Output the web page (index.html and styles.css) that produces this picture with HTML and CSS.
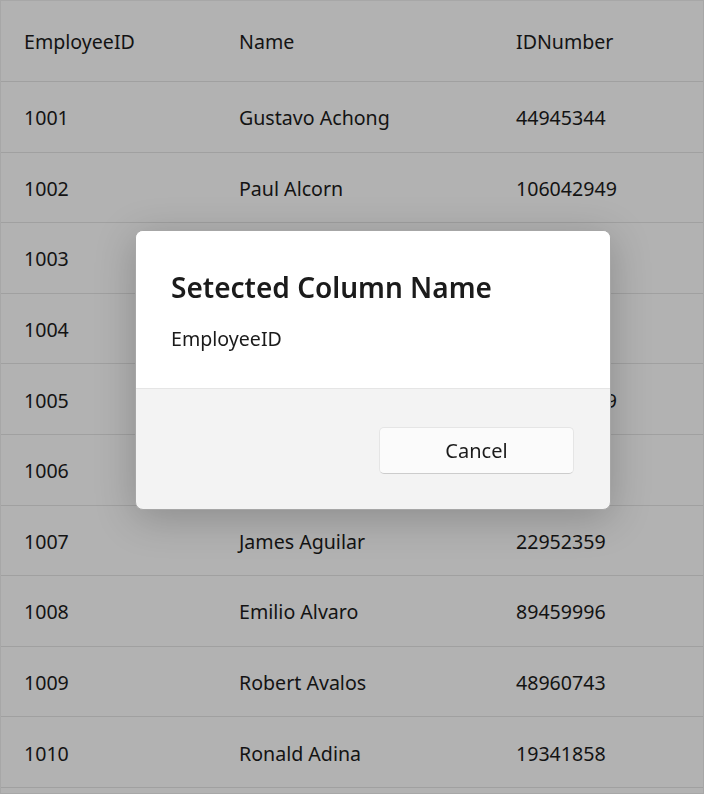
FILE: index.html
```html
<!DOCTYPE html>
<html>
<head>
<meta charset="utf-8">
<link rel="stylesheet" href="styles.css">
</head>
<body>
<div class="grid">
  <div class="row header">
    <div class="cell c1">EmployeeID</div>
    <div class="cell c2">Name</div>
    <div class="cell c3">IDNumber</div>
  </div>
  <div class="row"><div class="cell c1">1001</div><div class="cell c2">Gustavo Achong</div><div class="cell c3">44945344</div></div>
  <div class="row"><div class="cell c1">1002</div><div class="cell c2">Paul Alcorn</div><div class="cell c3">106042949</div></div>
  <div class="row"><div class="cell c1">1003</div><div class="cell c2"></div><div class="cell c3"></div></div>
  <div class="row"><div class="cell c1">1004</div><div class="cell c2"></div><div class="cell c3"></div></div>
  <div class="row"><div class="cell c1">1005</div><div class="cell c2"></div><div class="cell c3">102763549</div></div>
  <div class="row"><div class="cell c1">1006</div><div class="cell c2"></div><div class="cell c3"></div></div>
  <div class="row"><div class="cell c1">1007</div><div class="cell c2">James Aguilar</div><div class="cell c3">22952359</div></div>
  <div class="row"><div class="cell c1">1008</div><div class="cell c2">Emilio Alvaro</div><div class="cell c3">89459996</div></div>
  <div class="row"><div class="cell c1">1009</div><div class="cell c2">Robert Avalos</div><div class="cell c3">48960743</div></div>
  <div class="row"><div class="cell c1">1010</div><div class="cell c2">Ronald Adina</div><div class="cell c3">19341858</div></div>
</div>
<div class="overlay"></div>
<div class="dialog">
  <div class="dialog-body">
    <div class="dialog-title">Setected Column Name</div>
    <div class="dialog-text">EmployeeID</div>
  </div>
  <div class="dialog-footer">
    <button class="btn">Cancel</button>
  </div>
</div>
</body>
</html>
```
FILE: styles.css
```css
html, body {
  margin: 0;
  padding: 0;
  width: 704px;
  height: 794px;
  overflow: hidden;
  background: #ffffff;
  font-family: "Noto Sans", "Open Sans", sans-serif;
  color: #1c1c1c;
}
.grid {
  box-sizing: border-box;
  width: 704px;
  height: 794px;
  border: 1px solid #f0f0f0;
  display: flex;
  flex-direction: column;
}
.row {
  display: flex;
  box-sizing: border-box;
  height: 70.6px;
  border-bottom: 1px solid #e5e5e5;
  flex: none;
}
.row.header {
  height: 81px;
}
.cell {
  display: flex;
  align-items: center;
  box-sizing: border-box;
  font-size: 19.6px;
  white-space: nowrap;
  overflow: hidden;
}
.row .cell { padding-top: 2px; }
.row.header .cell { padding-top: 0; }
.c1 { width: 215px; padding-left: 23px; }
.c2 { width: 277px; padding-left: 23px; }
.c3 { flex: 1; padding-left: 23px; }
.overlay {
  position: fixed;
  inset: 0;
  background: rgba(0, 0, 0, 0.3);
}
.dialog {
  position: absolute;
  left: 135px;
  top: 230px;
  width: 476px;
  height: 280px;
  box-sizing: border-box;
  border-radius: 8px;
  border: 1px solid #a6a6a6;
  overflow: hidden;
  display: flex;
  flex-direction: column;
  box-shadow: 0 8px 40px rgba(0, 0, 0, 0.22);
  background: #f3f3f3;
}
.dialog-body {
  background: #ffffff;
  height: 158px;
  box-sizing: border-box;
  border-bottom: 1px solid #e5e5e5;
  padding: 36px 35px 0;
}
.dialog-title {
  font-size: 28px;
  font-weight: 600;
  color: #1b1b1b;
  line-height: 40px;
}
.dialog-text {
  margin-top: 19px;
  font-size: 19.6px;
  color: #1b1b1b;
  line-height: 26px;
}
.dialog-footer {
  flex: 1;
  display: flex;
  justify-content: flex-end;
  align-items: flex-start;
  padding: 38px 36px 0 0;
}
.btn {
  width: 195px;
  height: 47px;
  box-sizing: border-box;
  background: #fbfbfb;
  border: 1px solid #e5e5e5;
  border-bottom-color: #cccccc;
  border-radius: 5px;
  font-family: inherit;
  font-size: 20px;
  color: #1b1b1b;
}
```
